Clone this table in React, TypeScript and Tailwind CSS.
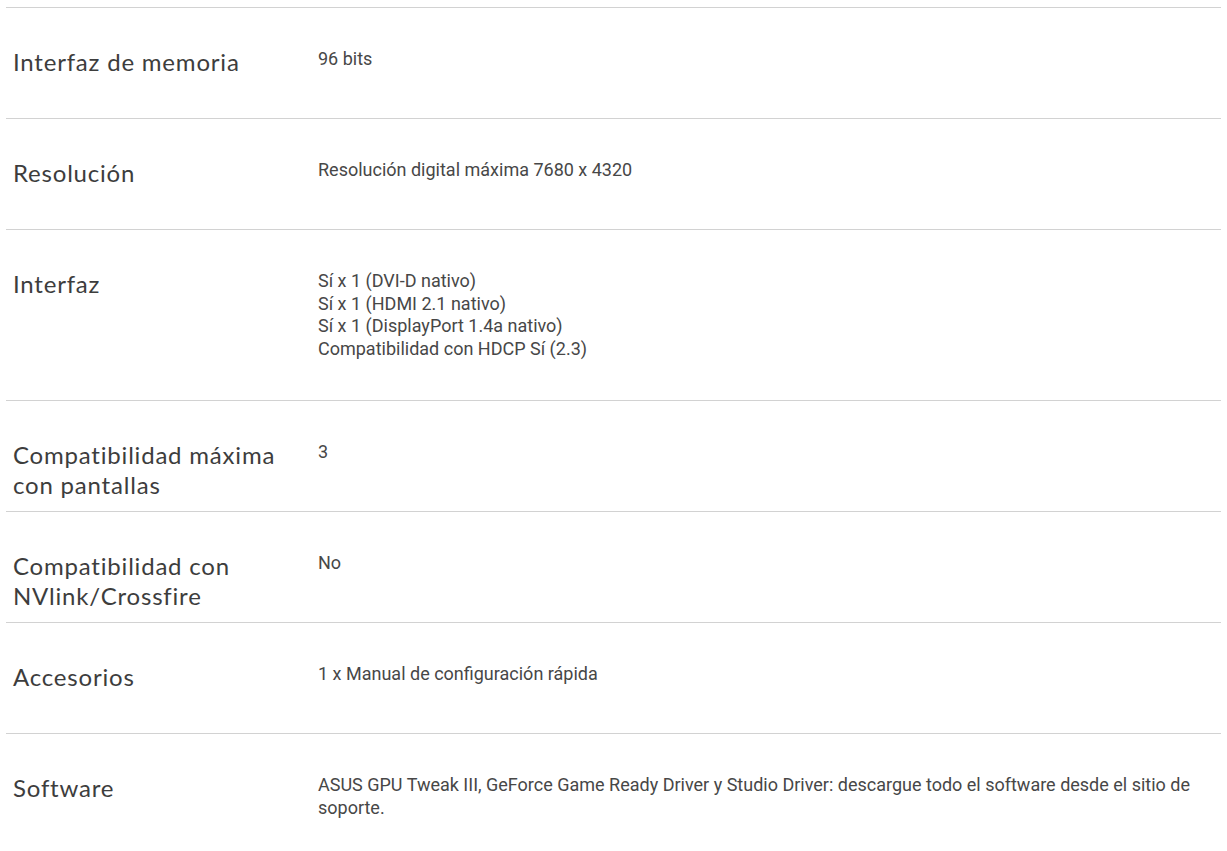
const specs: { label: string; value: string[] }[] = [
  { label: "Interfaz de memoria", value: ["96 bits"] },
  { label: "Resolución", value: ["Resolución digital máxima 7680 x 4320"] },
  {
    label: "Interfaz",
    value: [
      "Sí x 1 (DVI-D nativo)",
      "Sí x 1 (HDMI 2.1 nativo)",
      "Sí x 1 (DisplayPort 1.4a nativo)",
      "Compatibilidad con HDCP Sí (2.3)",
    ],
  },
  { label: "Compatibilidad máxima con pantallas", value: ["3"] },
  { label: "Compatibilidad con NVlink/Crossfire", value: ["No"] },
  { label: "Accesorios", value: ["1 x Manual de configuración rápida"] },
  {
    label: "Software",
    value: [
      "ASUS GPU Tweak III, GeForce Game Ready Driver y Studio Driver: descargue todo el software desde el sitio de soporte.",
    ],
  },
];

export default function App() {
  return (
    <div className="min-h-[851px] bg-white px-[6px] pt-[7px] w-[1227px]">
      {specs.map((row) => (
        <div key={row.label} className="flex min-h-[111px] border-t border-[#d2d2d2]">
          <div
            className="w-[312px] shrink-0 pl-[7px] pr-[20px] pt-[39px] text-[24px] leading-[30px] tracking-[0.8px] text-[#3d3d3d]"
            style={{ fontFamily: "Lato, 'Noto Sans', sans-serif" }}
          >
            {row.label}
          </div>
          <div
            className="flex-1 py-[40px] pr-[22px] text-[18px] leading-[22.5px] text-[#474747]"
            style={{ fontFamily: "Roboto, 'Liberation Sans', sans-serif" }}
          >
            {row.value.map((line) => (
              <div key={line}>{line}</div>
            ))}
          </div>
        </div>
      ))}
    </div>
  );
}
